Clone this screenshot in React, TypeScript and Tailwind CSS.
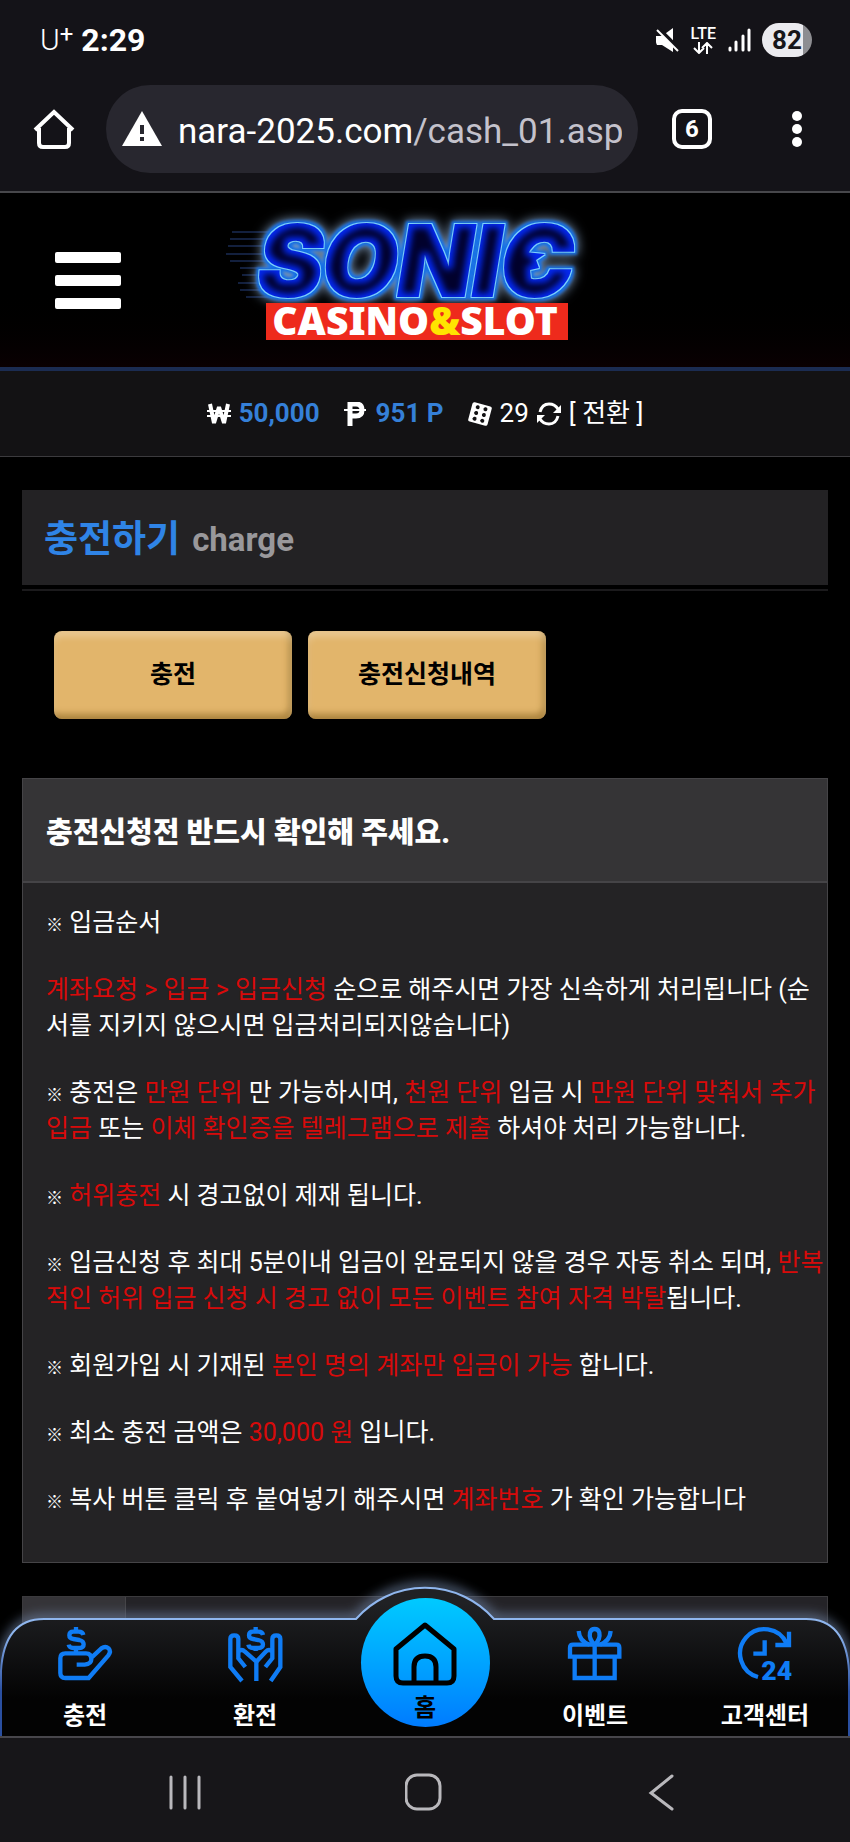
import * as React from 'react'

const BODY_FONT = "font-[Roboto,'Noto_Sans_CJK_KR',sans-serif]"

function StatusBar() {
  return (
    <div className="flex h-20 items-center justify-between pl-10 pr-[38px] text-white">
      <div className="flex items-center gap-2">
        <span className="flex items-start text-[30px] leading-8 font-light">
          U<sup className="top-0 text-[24px] leading-5 font-normal">+</sup>
        </span>
        <time className="text-[32px] leading-8 font-bold">2:29</time>
      </div>
      <div className="flex items-center gap-[11px]">
        <svg className="h-6 w-6" viewBox="0 0 24 24" aria-label="Muted">
          <path d="M0 8h6l11-8v24L6 17H1q-2-4-1-9z" fill="#fff" />
          <path d="M1 -1l24 24" stroke="#141318" strokeWidth="4" />
          <path d="M1 2l21 21" stroke="#fff" strokeWidth="2" />
        </svg>
        <div className="flex flex-col items-center">
          <span className="text-[16px] leading-4 font-medium">LTE</span>
          <svg className="h-3 w-5" viewBox="0 0 20 12" fill="none" stroke="#fff" strokeWidth="2" aria-hidden="true">
            <path d="M6 0v11M1 6l5 5 5-5M14 12V1M9 6l5-5 5 5" />
          </svg>
        </div>
        <svg className="h-6 w-6" viewBox="0 0 24 24" stroke="#fff" strokeWidth="3" strokeLinecap="round" aria-label="Signal">
          <path d="M3 20v2M9 14v8M16 8v14M22 2v20" />
        </svg>
        <span className="flex h-[34px] w-[50px] items-center justify-center rounded-full bg-[linear-gradient(to_right,#ebebef_82%,#8d8d91_82%)] text-[26px] font-bold text-[#17161a]">
          82
        </span>
      </div>
    </div>
  )
}

function BrowserBar() {
  return (
    <div className="flex h-[113px] items-start border-b-2 border-[#47474b] pr-[42px] pl-8 pt-[5px]">
      <button aria-label="Home" className="mt-6 shrink-0">
        <svg className="h-10 w-11" viewBox="0 0 44 40" fill="none" stroke="#fff" strokeWidth="4">
          <path d="M3 21L22 3l19 18M7 19v15q0 4 4 4h22q4 0 4-4V19" />
        </svg>
      </button>
      <div className="ml-[30px] flex h-[88px] min-w-0 flex-1 items-center gap-4 rounded-full bg-[#28272f] px-4">
        <svg className="h-9 w-10 shrink-0" viewBox="0 0 40 36" aria-hidden="true">
          <path d="M20 0l20 35H0z" fill="#fff" />
          <path d="M20 14v9M20 26v4" stroke="#28272f" strokeWidth="4" />
        </svg>
        <a href="#" className="min-w-0 flex-1 overflow-hidden pt-1.5 text-[35px] whitespace-nowrap text-white">
          nara-2025.com<span className="text-[#c4c2cc]">/cash_01.asp</span>
        </a>
      </div>
      <button
        aria-label="6 open tabs"
        className="mt-6 ml-[34px] flex h-10 w-10 shrink-0 items-center justify-center rounded-[10px] border-4 border-white text-[24px] font-bold text-white"
      >
        6
      </button>
      <button aria-label="More" className="mt-6 ml-[74px] shrink-0">
        <svg className="h-10 w-[22px]" viewBox="0 0 22 40" fill="#fff">
          <circle cx="11" cy="7" r="5" />
          <circle cx="11" cy="20" r="5" />
          <circle cx="11" cy="33" r="5" />
        </svg>
      </button>
    </div>
  )
}

function Logo() {
  return (
    <svg className="h-[150px] w-[400px]" viewBox="5 0 400 150" role="img" aria-label="Sonic Casino & Slot">
      <defs>
        {/* neon: halo, blue rim, light outline, blue face, dark core */}
        <filter id="neon" x="-20%" y="-40%" width="140%" height="180%" colorInterpolationFilters="sRGB">
          <feMorphology in="SourceAlpha" operator="dilate" radius="3" result="rim" />
          <feGaussianBlur in="rim" stdDeviation="6" result="haloShape" />
          <feFlood floodColor="#8aa8cc" />
          <feComposite in2="haloShape" operator="in" result="halo" />
          <feGaussianBlur in="rim" stdDeviation="1.5" result="rimSoft" />
          <feFlood floodColor="#1470e8" />
          <feComposite in2="rimSoft" operator="in" result="rimFill" />
          <feMorphology in="SourceAlpha" operator="dilate" radius="1" result="line" />
          <feFlood floodColor="#7fd4ff" />
          <feComposite in2="line" operator="in" result="lineFill" />
          <feFlood floodColor="#0428ee" />
          <feComposite in2="SourceAlpha" operator="in" result="faceFill" />
          <feMorphology in="SourceAlpha" operator="erode" radius="4" result="core" />
          <feGaussianBlur in="core" stdDeviation="3" result="coreSoft" />
          <feFlood floodColor="#01012c" />
          <feComposite in2="coreSoft" operator="in" result="coreFill" />
          <feMerge>
            <feMergeNode in="halo" />
            <feMergeNode in="rimFill" />
            <feMergeNode in="lineFill" />
            <feMergeNode in="faceFill" />
            <feMergeNode in="coreFill" />
          </feMerge>
        </filter>
      </defs>
      <path
        d="M12 27h60M10 34h60M8 41h50M6 49h50M10 56h50M20 63h40M22 70h40M18 78h30M20 85h30M26 92h30"
        stroke="#27407c"
      />
      <g filter="url(#neon)">
        <text x="38" y="91" stroke="#000" strokeWidth="2" className="font-[Inter] text-[97px] font-black italic">
          SONIC
        </text>
        <path d="M304 47l21 2-9 6 3 8-9 2 1 9-14 1z" />
      </g>
      <rect x="46" y="98" width="302" height="37" fill="#ee2a1c" />
      <text x="195" y="130" textAnchor="middle" fill="#fff" className="font-['Noto_Sans'] text-[39px] font-black">
        CASINO<tspan fill="#ffe500">&amp;</tspan>SLOT
      </text>
    </svg>
  )
}

function SiteHeader() {
  return (
    <header className="grid h-[178px] grid-cols-[1fr_auto_1fr] items-center border-b-4 border-[#1b2c52] bg-linear-to-b from-black from-50% to-[#0a0002]">
      <button aria-label="메뉴" className="ml-[55px] flex w-[66px] flex-col gap-3">
        <span className="h-[11px] rounded-xs bg-white" />
        <span className="h-[11px] rounded-xs bg-white" />
        <span className="h-[11px] rounded-xs bg-white" />
      </button>
      <a href="#">
        <Logo />
      </a>
    </header>
  )
}

function Balance() {
  return (
    <div className="flex h-[86px] items-center justify-center border-b border-[#3c3b3e] bg-[#131214] text-[26px] text-white">
      <svg className="mr-2 h-[22px] w-6" viewBox="0 0 24 22" fill="none" stroke="#fff" aria-label="보유금액">
        <path d="M3 1l4 19 5-16 5 16 4-19" strokeWidth="4" strokeLinejoin="bevel" />
        <path d="M0 8h24M0 13h24" strokeWidth="2" />
      </svg>
      <span className="mr-6 font-bold text-[#3580d8]">50,000</span>
      <svg className="mr-2.5 h-6 w-[22px]" viewBox="0 0 22 24" fill="none" stroke="#fff" aria-label="포인트">
        <path d="M6 24V2h6q6 0 6 6t-6 6H6" strokeWidth="5" />
        <path d="M0 8h22" strokeWidth="2" />
      </svg>
      <span className="mr-6 font-bold text-[#3580d8]">951 P</span>
      <svg className="mr-2 h-6 w-6" viewBox="0 0 24 24" aria-label="쿠폰">
        <g transform="rotate(15 12 12)">
          <rect x="2" y="2" width="20" height="20" rx="2" fill="#fff" />
          <g fill="#131214">
            <circle cx="8" cy="6" r="2" />
            <circle cx="8" cy="12" r="2" />
            <circle cx="8" cy="18" r="2" />
            <circle cx="16" cy="6" r="2" />
            <circle cx="16" cy="12" r="2" />
            <circle cx="16" cy="18" r="2" />
          </g>
        </g>
      </svg>
      <span>29</span>
      <a href="#" className="ml-2 flex items-center">
        <svg className="mr-2 h-6 w-6" viewBox="0 0 24 24" aria-hidden="true">
          <path d="M3 10q2-8 9-8 6 0 9 5M21 14q-2 8-9 8-6 0-9-5" fill="none" stroke="#fff" strokeWidth="3" />
          <path d="M24 3v8h-8zM0 21v-8h8z" fill="#fff" />
        </svg>
        [ 전환 ]
      </a>
    </div>
  )
}

function Red({ children }: { children: React.ReactNode }) {
  return <span className="text-[#d80a0a]">{children}</span>
}

function Mark() {
  return <span className="text-[17px] leading-none font-black">※</span>
}

function Notice() {
  return (
    <section className="mx-[22px] mt-[59px] border border-[#454447] bg-[#242325] text-white">
      <h2 className="border-b-2 border-[#454447] bg-[#353436] px-[23px] pt-[33px] pb-[27px] text-[29px] leading-[42px] font-black">
        충전신청전 반드시 확인해 주세요.
      </h2>
      <div className="space-y-[31px] pt-[22px] pb-11 pl-[23px] text-[25px] leading-9 break-all">
        <p>
          <Mark /> 입금순서
        </p>
        <p>
          <Red>계좌요청 &gt; 입금 &gt; 입금신청</Red> 순으로 해주시면 가장 신속하게 처리됩니다 (순서를 지키지 않으시면 입금처리되지않습니다)
        </p>
        <p>
          <Mark /> 충전은 <Red>만원 단위</Red> 만 가능하시며, <Red>천원 단위</Red> 입금 시 <Red>만원 단위 맞춰서 추가입금</Red> 또는{' '}
          <Red>이체 확인증을 텔레그램으로 제출</Red> 하셔야 처리 가능합니다.
        </p>
        <p>
          <Mark /> <Red>허위충전</Red> 시 경고없이 제재 됩니다.
        </p>
        <p>
          <Mark /> 입금신청 후 최대 5분이내 입금이 완료되지 않을 경우 자동 취소 되며,{' '}
          <Red>반복적인 허위 입금 신청 시 경고 없이 모든 이벤트 참여 자격 박탈</Red>됩니다.
        </p>
        <p>
          <Mark /> 회원가입 시 기재된 <Red>본인 명의 계좌만 입금이 가능</Red> 합니다.
        </p>
        <p>
          <Mark /> 최소 충전 금액은 <Red>30,000 원</Red> 입니다.
        </p>
        <p>
          <Mark /> 복사 버튼 클릭 후 붙여넣기 해주시면 <Red>계좌번호</Red> 가 확인 가능합니다
        </p>
      </div>
    </section>
  )
}

const tabs = ['충전', '충전신청내역']

function ChargeIcon() {
  return (
    <>
      <path d="M56 113h24q20-2 20-16 0-18-16-18H22Q7 79 7 94v44q0 15 15 15h70l59-68q9-12 1-21-10-8-22 0L98 94" />
      <path d="M76 24q-2-10-14-10H46q-12 0-12 11 0 10 12 11l18 3q13 3 13 13 0 11-13 11H46q-12 0-14-10M54 0v14M54 63v16" />
    </>
  )
}

function ExchangeIcon() {
  return (
    <>
      <path d="M42 162L7 120V36q0-11 12-11t12 11v58l21 26M31 74q10-10 20 0l34 30v58" />
      <path d="M128 162l29-42V36q0-11-12-11t-12 11v58l-21 26M133 74q-10-10-20 0l-28 30" />
      <path d="M105 24q-2-10-14-10H75q-12 0-12 11 0 10 12 11l16 3q14 3 14 13 0 11-14 11H75q-12 0-14-10M83 0v14M83 63v9" />
    </>
  )
}

function EventIcon() {
  return (
    <>
      <path d="M6 89V62q0-9 9-9h130q9 0 9 9v27zM20 89v64h120V89M80 53v100" />
      <path d="M80 53q-18-16-14-36 3-11 14-11t14 11q4 20-14 36M32 12q2 30 32 41M128 12q-2 30-32 41" />
    </>
  )
}

function SupportIcon() {
  return (
    <>
      <path d="M60 150A73 73 0 1 1 146 50M153 14v40h-41M80 40v40H46" />
      <text x="70" y="158" fill="#0f7cf5" stroke="none" className="font-[Roboto] text-[80px] font-black">
        24
      </text>
    </>
  )
}

interface NavItemProps {
  label: string
  children: React.ReactNode
}

function NavItem({ label, children }: NavItemProps) {
  return (
    <a href="#" className="flex flex-1 flex-col items-center pt-10">
      <svg
        className="h-[54px] w-[54px] overflow-visible"
        viewBox="0 0 162 162"
        fill="none"
        stroke="#0f7cf5"
        strokeWidth="13"
        aria-hidden="true"
      >
        {children}
      </svg>
      <span className="mt-[17px] text-[24px] leading-9 font-bold">{label}</span>
    </a>
  )
}

function BottomNav() {
  return (
    <nav className="relative h-[149px] text-white">
      {/* bar outline with the raised centre */}
      <svg className="absolute inset-0 h-full w-full overflow-visible" viewBox="0 0 850 149" preserveAspectRatio="none" aria-hidden="true">
        <defs>
          <linearGradient id="bar" x1="0" y1="0" x2="0" y2="1">
            <stop offset="0.1" stopColor="#202124" />
            <stop offset="0.75" stopColor="#030303" />
          </linearGradient>
          <linearGradient id="edge" x1="0" y1="0" x2="0" y2="1">
            <stop offset="0.3" stopColor="#8fb6ee" />
            <stop offset="0.7" stopColor="#2a4fa0" />
          </linearGradient>
          <filter id="halo" x="-5%" y="-20%" width="110%" height="140%">
            <feGaussianBlur stdDeviation="6" />
          </filter>
        </defs>
        <path d="M2 84Q6 32 44 32H356A90 90 0 0 1 494 32H806Q844 32 848 84" fill="none" stroke="#6c7f9f" strokeWidth="7" filter="url(#halo)" />
        <path d="M1 149V84Q4 32 44 32H356A92 92 0 0 1 494 32H806Q846 32 849 84V149" fill="url(#bar)" stroke="url(#edge)" strokeWidth="2" />
      </svg>
      <div className="relative flex h-full">
        <NavItem label="충전">
          <ChargeIcon />
        </NavItem>
        <NavItem label="환전">
          <ExchangeIcon />
        </NavItem>
        <div className="flex flex-1 justify-center pt-[11px]">
          <a href="#" className="flex h-[129px] w-[129px] flex-col items-center rounded-full bg-linear-to-b from-[#00caff] to-[#007bff] pt-6 text-black">
            <svg className="h-16 w-16 shrink-0" viewBox="0 0 64 64" fill="none" stroke="#000" strokeWidth="5" strokeLinejoin="round" aria-hidden="true">
              <path d="M3 27L32 3l29 24v27q0 7-7 7H10q-7 0-7-7zM21 61V45q0-11 11-11t11 11v16" />
            </svg>
            <span className="mt-1 text-[24px] leading-9 font-bold">홈</span>
          </a>
        </div>
        <NavItem label="이벤트">
          <EventIcon />
        </NavItem>
        <NavItem label="고객센터">
          <SupportIcon />
        </NavItem>
      </div>
    </nav>
  )
}

function SystemNav() {
  return (
    <div className="flex h-[106px] items-center justify-between border-t-2 border-[#47464b] bg-[#171619] px-[166px] pt-1">
      <button aria-label="Recent apps">
        <svg className="h-10 w-10" viewBox="0 0 40 40" stroke="#b9b8bc" strokeWidth="3" strokeLinecap="round">
          <path d="M5 5v31M19 5v31M33 5v31" />
        </svg>
      </button>
      <button aria-label="Home screen">
        <svg className="h-10 w-10" viewBox="0 0 40 40" fill="none" stroke="#b9b8bc" strokeWidth="3">
          <rect x="1" y="3" width="34" height="34" rx="11" />
        </svg>
      </button>
      <button aria-label="Back">
        <svg className="h-10 w-10" viewBox="0 0 40 40" fill="none" stroke="#b9b8bc" strokeWidth="3" strokeLinecap="round">
          <path d="M28 4L7 21l21 16" />
        </svg>
      </button>
    </div>
  )
}

export default function App() {
  return (
    <div className={`flex min-h-screen flex-col bg-black ${BODY_FONT}`}>
      <div className="bg-[#141318]">
        <StatusBar />
        <BrowserBar />
      </div>
      <SiteHeader />
      <Balance />

      <main className="flex-1">
        <div className="mx-[22px] mt-[33px] border-b-2 border-[#1b1a1c] pb-1">
          <h1 className="flex h-[95px] items-center bg-[#232224] px-[22px] pt-1 text-[37px] font-bold text-[#2f84e6]">
            충전하기 <small className="ml-3 text-[33px] font-bold text-[#99989b]">charge</small>
          </h1>
        </div>

        <div className="mt-10 ml-[54px] flex gap-4">
          {tabs.map((tab) => (
            <button
              key={tab}
              className="h-[88px] w-[238px] rounded-lg bg-[#e2b56b] text-[25px] font-bold text-black shadow-[inset_0_6px_6px_rgba(255,255,255,0.25),inset_-3px_-5px_6px_rgba(120,85,20,0.5)]"
            >
              {tab}
            </button>
          ))}
        </div>

        <Notice />

        <div className="mx-[22px] mt-[33px] flex h-[140px] border border-[#3b3a3d] bg-[#242327]">
          <div className="w-[103px] border-r border-[#454447] bg-[#353438]" />
        </div>
      </main>

      <footer className="sticky bottom-0 -mt-[149px]">
        <BottomNav />
        <SystemNav />
      </footer>
    </div>
  )
}
